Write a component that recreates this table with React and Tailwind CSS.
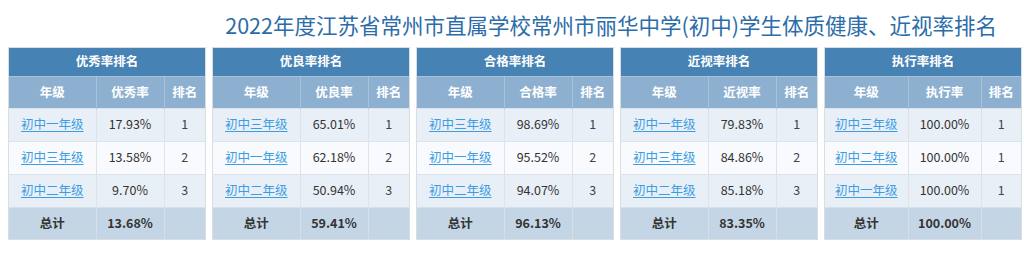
import React from "react";

const cards = [
  {
    title: "优秀率排名",
    col: "优秀率",
    rows: [
      ["初中一年级", "17.93%", "1"],
      ["初中三年级", "13.58%", "2"],
      ["初中二年级", "9.70%", "3"],
    ],
    total: "13.68%",
    w: ["w-[87px]", "w-[68px]", "w-auto"],
  },
  {
    title: "优良率排名",
    col: "优良率",
    rows: [
      ["初中三年级", "65.01%", "1"],
      ["初中一年级", "62.18%", "2"],
      ["初中二年级", "50.94%", "3"],
    ],
    total: "59.41%",
    w: ["w-[87px]", "w-[68px]", "w-auto"],
  },
  {
    title: "合格率排名",
    col: "合格率",
    rows: [
      ["初中三年级", "98.69%", "1"],
      ["初中一年级", "95.52%", "2"],
      ["初中二年级", "94.07%", "3"],
    ],
    total: "96.13%",
    w: ["w-[87px]", "w-[68px]", "w-auto"],
  },
  {
    title: "近视率排名",
    col: "近视率",
    rows: [
      ["初中一年级", "79.83%", "1"],
      ["初中三年级", "84.86%", "2"],
      ["初中二年级", "85.18%", "3"],
    ],
    total: "83.35%",
    w: ["w-[87px]", "w-[68px]", "w-auto"],
  },
  {
    title: "执行率排名",
    col: "执行率",
    rows: [
      ["初中三年级", "100.00%", "1"],
      ["初中二年级", "100.00%", "1"],
      ["初中一年级", "100.00%", "1"],
    ],
    total: "100.00%",
    w: ["w-[83px]", "w-[73px]", "w-auto"],
  },
];

function Card({ c }) {
  return (
    <div className="flex-1 border border-[#d9dee4] bg-white">
      <table className="w-full border-collapse table-fixed text-[12.5px]">
        <colgroup>
          <col className={c.w[0]} />
          <col className={c.w[1]} />
          <col className={c.w[2]} />
        </colgroup>
        <thead>
          <tr>
            <th
              colSpan={3}
              className="h-[28px] bg-[#4682b4] text-white font-bold text-center p-0"
            >
              {c.title}
            </th>
          </tr>
          <tr className="bg-[#8eb0d0] text-white font-bold">
            <th className="h-[32px] p-0 border-t border-[#a9c2da]">年级</th>
            <th className="h-[32px] p-0 border-t border-l border-[#a9c2da]">{c.col}</th>
            <th className="h-[32px] p-0 border-t border-l border-[#a9c2da]">排名</th>
          </tr>
        </thead>
        <tbody>
          {c.rows.map((r, i) => (
            <tr key={i} className={i % 2 === 0 ? "bg-[#e9eff7]" : "bg-[#f8fafd]"}>
              <td className="h-[33px] p-0 text-center border-t border-[#dde3ea]">
                <a href="#" className="text-[#3c9de2] underline underline-offset-2">
                  {r[0]}
                </a>
              </td>
              <td className="h-[33px] p-0 text-center text-[#333] border-t border-l border-[#dde3ea]">
                {r[1]}
              </td>
              <td className="h-[33px] p-0 text-center text-[#444] border-t border-l border-[#dde3ea]">
                {r[2]}
              </td>
            </tr>
          ))}
          <tr className="bg-[#c4d6e5] font-bold text-[#333]">
            <td className="h-[32px] p-0 text-center border-t border-[#d5e0ea]">总计</td>
            <td className="h-[32px] p-0 text-center border-t border-l border-[#d5e0ea]">{c.total}</td>
            <td className="h-[32px] p-0 border-t border-l border-[#d5e0ea]"></td>
          </tr>
        </tbody>
      </table>
    </div>
  );
}

export default function App() {
  return (
    <div
      className="w-[1024px] h-[271px] bg-white overflow-hidden"
      style={{ fontFamily: '"Noto Sans CJK SC", "Noto Sans", sans-serif' }}
    >
      <div className="pt-[12px] pr-[27px] text-right text-[21.5px] leading-[26px] text-[#2c6da9]">
        2022年度江苏省常州市直属学校常州市丽华中学(初中)学生体质健康、近视率排名
      </div>
      <div className="mt-[9px] flex gap-[6px] pl-[8px] pr-[2px]">
        {cards.map((c) => (
          <Card key={c.title} c={c} />
        ))}
      </div>
    </div>
  );
}
